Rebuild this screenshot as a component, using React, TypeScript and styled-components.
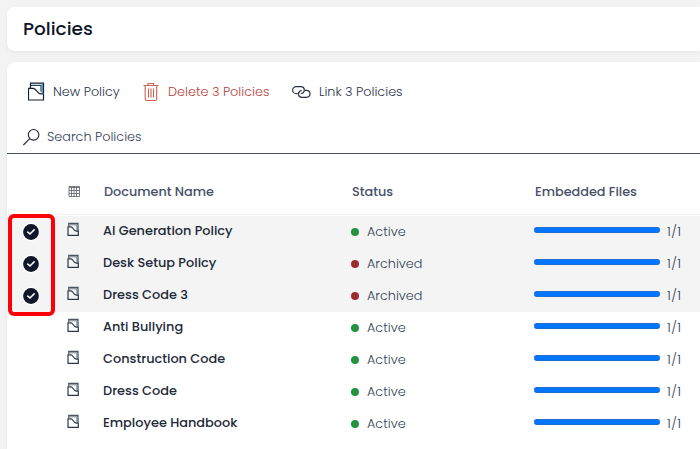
import React from "react";
import styled, { createGlobalStyle } from "styled-components";

const GlobalStyle = createGlobalStyle`
  * { box-sizing: border-box; }
  body {
    margin: 0;
    overflow: hidden;
    background: #f3f3f3;
    color: #475069;
    font-family: Poppins, Inter, sans-serif;
    font-size: 12.8px;
  }
`;

const Page = styled.main`
  display: flex;
  flex-direction: column;
  gap: 11px;
  height: 449px;
  padding: 7px 0 0 7px;
`;

const TitleCard = styled.header`
  display: flex;
  align-items: center;
  flex: none;
  height: 44px;
  padding: 0 16px;
  background: #fff;
  border-radius: 8px 0 0 8px;
  box-shadow: 0 2px 5px rgba(0, 0, 0, 0.05);
`;

const Title = styled.h1`
  margin: 0;
  color: #0f172a;
  font-size: 18.5px;
  font-weight: 500;
  line-height: 44px;
`;

const Panel = styled.section`
  flex: 1;
  background: #fff;
  border-radius: 8px 0 0 0;
  box-shadow: 0 2px 5px rgba(0, 0, 0, 0.05);
`;

const Toolbar = styled.div`
  display: grid;
  grid-template-columns: 115px 149px 130px;
  height: 59px;
  padding-left: 21px;
`;

const Action = styled.button<{ $danger?: boolean; $gap: number }>`
  display: flex;
  align-items: center;
  gap: ${(p) => p.$gap}px;
  padding: 0;
  border: 0;
  background: none;
  color: ${(p) => (p.$danger ? "#b8423b" : "#2c354e")};
  font: inherit;
  white-space: nowrap;
`;

const Label = styled.span<{ $light?: boolean }>`
  color: ${(p) => (p.$light ? "inherit" : "#475069")};
  font-weight: ${(p) => (p.$light ? 300 : "inherit")};
  white-space: nowrap;
`;

const SearchBar = styled.div`
  display: flex;
  align-items: center;
  gap: 7px;
  height: 33px;
  padding: 0 0 1px 16px;
  border-bottom: 1px solid #475069;
  color: #353e56;
`;

const columns = "60px 36px 248px 183px 1fr";

const HeadRow = styled.div`
  display: grid;
  grid-template-columns: ${columns};
  align-items: center;
  height: 61px;
  padding-top: 15px;
  border-bottom: 1px solid #f1f1f1;
  margin-bottom: 1px;
  font-weight: 500;
`;

const HeadCell = styled.div`
  padding-left: 1px;
  display: flex;
  align-items: center;
`;

const Row = styled.div<{ $selected: boolean }>`
  display: grid;
  grid-template-columns: ${columns};
  align-items: center;
  height: 32px;
  background: ${(p) => (p.$selected ? "#f4f4f4" : "#fff")};
`;

const CheckCell = styled.div`
  display: flex;
  padding: 0 0 0 15px;
`;

const IconCell = styled.div`
  display: flex;
  padding: 0 0 6px 0;
`;

const Name = styled.div`
  padding-bottom: 3px;
  color: #1e2939;
  font-size: 12.88px;
  font-weight: 500;
  line-height: 20px;
`;

const Status = styled.div`
  display: flex;
  align-items: center;
  gap: 8px;
  color: #353e56;
  line-height: 20px;
`;

const Dot = styled.span<{ $color: string }>`
  width: 8px;
  height: 8px;
  border-radius: 50%;
  background: ${(p) => p.$color};
`;

const Files = styled.div`
  display: flex;
  align-items: center;
  gap: 7px;
  color: #353e56;
  line-height: 20px;
  letter-spacing: 0.4px;
`;

const Bar = styled.div`
  width: 126px;
  height: 6px;
  margin-bottom: 4px;
  border: 1px solid #1e6fcf;
  border-width: 1px 0;
  border-radius: 3px;
  background: #0075ff;
`;

const Highlight = styled.div`
  position: absolute;
  left: 8px;
  top: 214px;
  width: 47px;
  height: 102px;
  border: 4px solid #fb0007;
  border-radius: 6px;
`;

function PolicyIcon() {
  return (
    <svg width="18" height="19" viewBox="0 0 18 19" fill="none" stroke="#142033" strokeWidth="1.2">
      <path d="M2.5 6V1.2H15.5V11" />
      <path d="M3 3.3H13V9.5" stroke="#22465f" />
      <path d="M14.2 2V11" stroke="#3286b9" />
      <path d="M.5 6.3H5.5C8 6.5 9.5 11.9 12.5 11.9H15.5V18H.5Z" fill="#fff" />
    </svg>
  );
}

function PolicyRowIcon() {
  return (
    <svg width="13" height="14" viewBox="0 0 13 14" fill="none" stroke="#2c3848">
      <path d="M1.8 4V1.5H11V9" stroke="#4b5563" strokeWidth="1.3" />
      <path d="M2.3 2.8H9.8V8.5" stroke="#7b838d" />
      <path d="M1 4.8H4.2C6.2 5 6.5 9.2 9.2 9.2H11.3V13.3H1Z" strokeWidth="1.2" />
    </svg>
  );
}

function TrashIcon() {
  return (
    <svg width="17" height="20" viewBox="0 0 17 20" fill="none" stroke="#c96250" strokeWidth="1.1">
      <path d="M.5 3.5H15.5M5 3.5V1.5H10.5V3.5M2.2 3.5V17Q2.2 18.5 3.7 18.5H12.2Q13.7 18.5 13.7 17V3.5M5.5 6.5V15.5M8 6.5V15.5M10.5 6.5V15.5" />
    </svg>
  );
}

function LinkIcon() {
  return (
    <svg width="20" height="14" viewBox="0 0 20 14" fill="none" stroke="#27303d" strokeWidth="1.2">
      <path d="M5.6 8.6H4.3C2.4 8.6 .6 7.2 .6 5.2S2.4 1.6 4.3 1.6H8.8C10.8 1.6 12.3 3 12.3 5.1S10.8 8.5 8.8 8.5" />
      <path d="M12.8 5.4H14.3C16.3 5.4 18 6.7 18 8.8S16.3 12.3 14.3 12.3H10.2C8.1 12.3 6.5 10.9 6.5 8.9S8.1 5.5 9.8 5.5" />
    </svg>
  );
}

function SearchIcon() {
  return (
    <svg width="17" height="18" viewBox="0 0 17 18" fill="none" stroke="#202338" strokeWidth="1.1">
      <circle cx="10.6" cy="6.8" r="5.3" />
      <path d="M6.8 10.6L.4 17" />
    </svg>
  );
}

function GridIcon() {
  return (
    <svg width="12" height="11" viewBox="0 0 12 11" fill="none" stroke="#6b6d79" strokeWidth=".9">
      <path d="M1 .5H11.5V10.5H1ZM1 1.5H11.5M1 4.5H11.5M1 7.5H11.5M3.5 1.5V10.5M6 1.5V10.5M8.5 1.5V10.5" />
    </svg>
  );
}

function CheckIcon() {
  return (
    <svg width="18" height="18" viewBox="0 0 18 18">
      <circle cx="9" cy="9" r="9" fill="#fff" />
      <circle cx="9" cy="9" r="7.9" fill="#0f172a" />
      <path d="M5.3 8.6L8 11L12.6 6.4" fill="none" stroke="#fff" strokeWidth="1.5" />
    </svg>
  );
}

const policies = [
  { name: "AI Generation Policy", active: true, selected: true },
  { name: "Desk Setup Policy", active: false, selected: true },
  { name: "Dress Code 3", active: false, selected: true },
  { name: "Anti Bullying", active: true, selected: false },
  { name: "Construction Code", active: true, selected: false },
  { name: "Dress Code", active: true, selected: false },
  { name: "Employee Handbook", active: true, selected: false },
];

export default function App() {
  return (
    <>
      <GlobalStyle />
      <Page>
        <TitleCard>
          <Title>Policies</Title>
        </TitleCard>
        <Panel>
          <Toolbar>
            <Action $gap={7}><PolicyIcon /><Label $light>New Policy</Label></Action>
            <Action $gap={8} $danger><TrashIcon /><Label $light>Delete 3 Policies</Label></Action>
            <Action $gap={7}><LinkIcon /><Label $light>Link 3 Policies</Label></Action>
          </Toolbar>
          <SearchBar><SearchIcon /><Label $light>Search Policies</Label></SearchBar>
          <HeadRow>
            <span />
            <HeadCell><GridIcon /></HeadCell>
            <HeadCell><Label>Document Name</Label></HeadCell>
            <HeadCell><Label>Status</Label></HeadCell>
            <HeadCell><Label>Embedded Files</Label></HeadCell>
          </HeadRow>
          {policies.map((p) => (
            <Row key={p.name} $selected={p.selected}>
              <CheckCell>{p.selected && <CheckIcon />}</CheckCell>
              <IconCell><PolicyRowIcon /></IconCell>
              <Name>{p.name}</Name>
              <Status>
                <Dot $color={p.active ? "#28923f" : "#9d2d31"} />
                <Label $light>{p.active ? "Active" : "Archived"}</Label>
              </Status>
              <Files><Bar /><Label $light>1/1</Label></Files>
            </Row>
          ))}
        </Panel>
      </Page>
      <Highlight />
    </>
  );
}
